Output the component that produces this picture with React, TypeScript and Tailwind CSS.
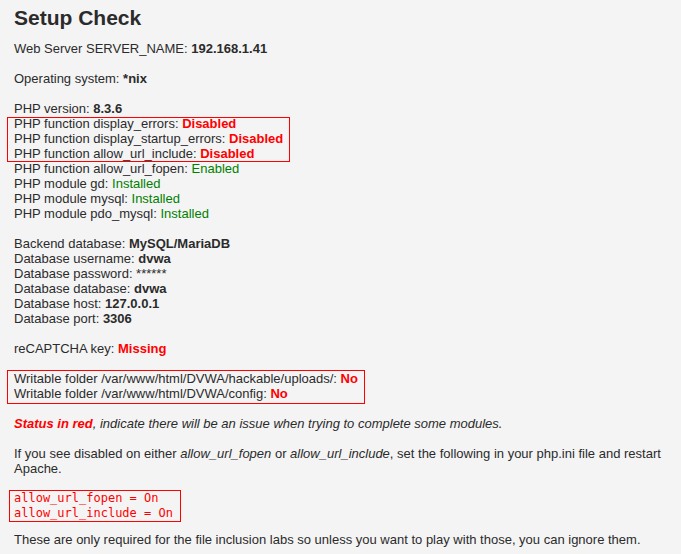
import React from "react";

const Red = ({ children }: { children: React.ReactNode }) => (
  <span className="font-bold text-[#ff0000]">{children}</span>
);
const Green = ({ children }: { children: React.ReactNode }) => (
  <span className="text-[#008000]">{children}</span>
);
const B = ({ children }: { children: React.ReactNode }) => (
  <span className="font-bold">{children}</span>
);
const Blank = () => <div className="h-[15px]" />;

function RedBox({ children, tall }: { children: React.ReactNode; tall?: boolean }) {
  return (
    <div className="relative -ml-[7px] w-fit px-[7px]">
      {children}
      <span
        className={
          tall
            ? "pointer-events-none absolute inset-x-0 -top-px -bottom-[3px] border border-solid border-[red]"
            : "pointer-events-none absolute inset-x-0 top-px -bottom-px border border-solid border-[red]"
        }
      />
    </div>
  );
}

export default function App() {
  return (
    <div
      className="min-h-[554px] w-[681px] bg-[#f4f4f4] pl-[14px] pr-[10px] text-[13px] leading-[15px] text-[#2b2b2b]"
      style={{ fontFamily: '"Liberation Sans", Arial, sans-serif' }}
    >
      <h1 className="pt-[6px] text-[21px] font-bold leading-[24px] text-[#2b2b2b]">Setup Check</h1>
      <div className="mt-[11px]">
        <div>
          Web Server SERVER_NAME: <B>192.168.1.41</B>
        </div>
        <Blank />
        <div>
          Operating system: <B>*nix</B>
        </div>
        <Blank />
        <div>
          PHP version: <B>8.3.6</B>
        </div>
        <RedBox>
          <div>
            PHP function display_errors: <Red>Disabled</Red>
          </div>
          <div>
            PHP function display_startup_errors: <Red>Disabled</Red>
          </div>
          <div>
            PHP function allow_url_include: <Red>Disabled</Red>
          </div>
        </RedBox>
        <div>
          PHP function allow_url_fopen: <Green>Enabled</Green>
        </div>
        <div>
          PHP module gd: <Green>Installed</Green>
        </div>
        <div>
          PHP module mysql: <Green>Installed</Green>
        </div>
        <div>
          PHP module pdo_mysql: <Green>Installed</Green>
        </div>
        <Blank />
        <div>
          Backend database: <B>MySQL/MariaDB</B>
        </div>
        <div>
          Database username: <B>dvwa</B>
        </div>
        <div>Database password: ******</div>
        <div>
          Database database: <B>dvwa</B>
        </div>
        <div>
          Database host: <B>127.0.0.1</B>
        </div>
        <div>
          Database port: <B>3306</B>
        </div>
        <Blank />
        <div>
          reCAPTCHA key: <Red>Missing</Red>
        </div>
        <Blank />
        <RedBox tall>
          <div>
            Writable folder /var/www/html/DVWA/hackable/uploads/: <Red>No</Red>
          </div>
          <div>
            Writable folder /var/www/html/DVWA/config: <Red>No</Red>
          </div>
        </RedBox>
        <Blank />
        <div className="italic">
          <span className="font-bold text-[#ff0000]">Status in red</span>, indicate there will be an issue when
          trying to complete some modules.
        </div>
        <Blank />
        <div>
          If you see disabled on either <i>allow_url_fopen</i> or <i>allow_url_include</i>, set the following in
          your php.ini file and restart Apache.
        </div>
        <div
          className="-ml-[5px] mt-[14px] w-[172px] border border-solid border-[red] pl-[4px] text-[12px] leading-[15px] text-[#ff0000]"
          style={{ fontFamily: '"DejaVu Sans Mono", "Liberation Mono", monospace' }}
        >
          <div>allow_url_fopen = On</div>
          <div>allow_url_include = On</div>
        </div>
        <div className="mt-[10px]">
          These are only required for the file inclusion labs so unless you want to play with those, you can ignore
          them.
        </div>
      </div>
    </div>
  );
}
